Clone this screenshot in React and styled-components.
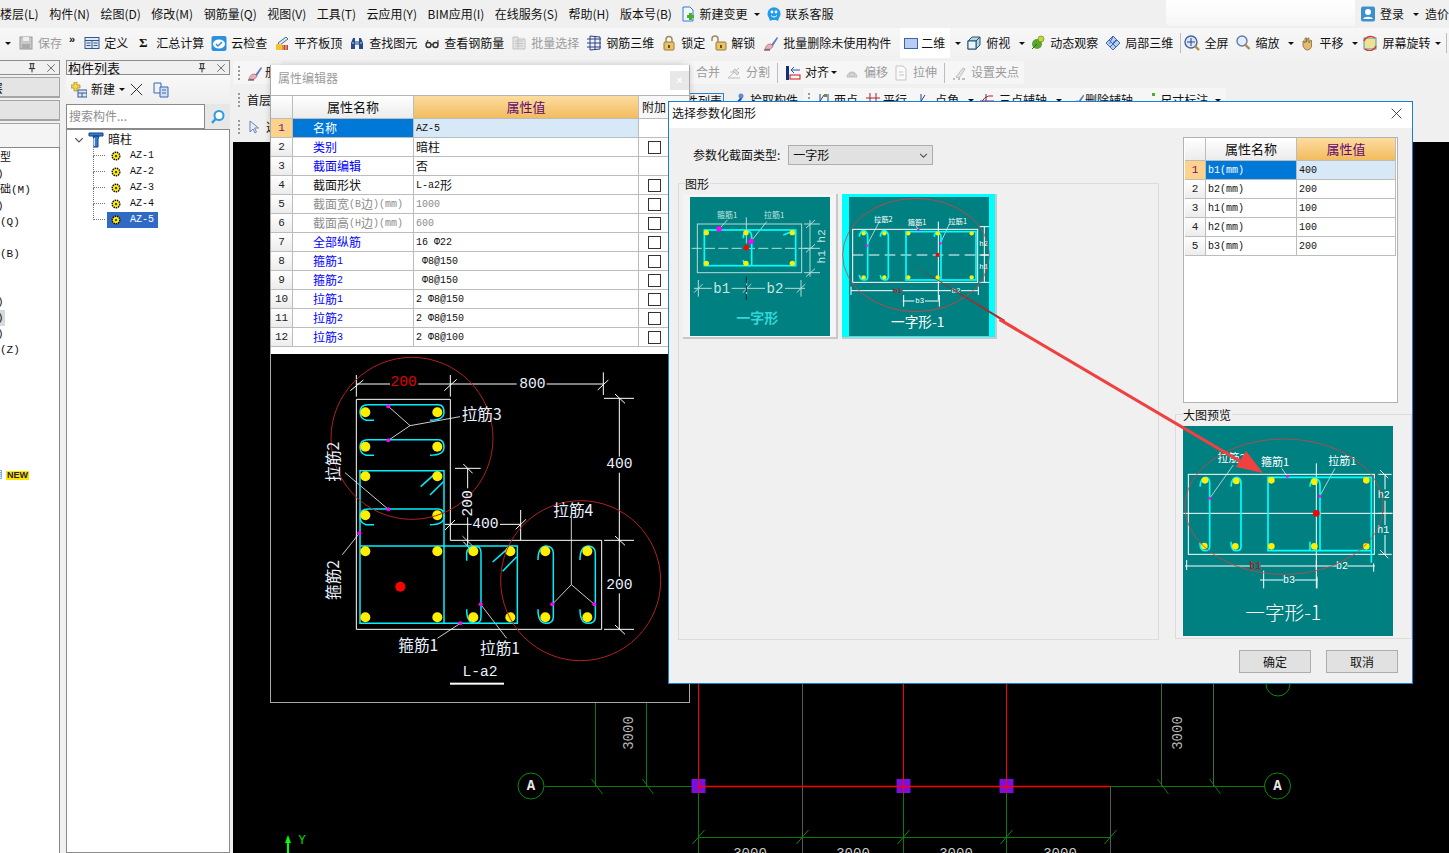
import React from 'react';
import styled, { createGlobalStyle } from 'styled-components';

const CJK = '"Noto Sans CJK SC", "Noto Sans", sans-serif';
const MONO = '"Liberation Mono", "Noto Sans CJK SC", monospace';

const GlobalStyle = createGlobalStyle`
  html, body { margin: 0; padding: 0; background: #f0f0f0; }
  body { font: 12px/1.2 ${CJK}; color: #111; }
  * { box-sizing: border-box; }
`;

const Page = styled.div`
  position: relative;
  width: 1449px;
  height: 853px;
  overflow: hidden;
  background: #f0f0f0;
  display: flex;
  flex-direction: column;
`;

const MenuBar = styled.div`
  height: 28px;
  display: flex;
  align-items: center;
  gap: 10.5px;
  white-space: nowrap;
`;

const MenuItem = styled.span`
  margin-left: ${p => p.$ml || 0}px;
`;

const BlankTab = styled.div`
  position: absolute;
  left: 1166px;
  top: 0;
  width: 189px;
  height: 26px;
  border-radius: 0 0 4px 4px;
  background: linear-gradient(#fff, #f6f6f6);
`;

const MenuRight = styled.div`
  margin-left: auto;
  display: flex;
  align-items: center;
  gap: 4px;
  width: 89px;
  flex: none;
`;

const MainBar = styled.div`
  height: 32px;
  display: flex;
  align-items: center;
  gap: 7px;
  padding: 0 0 2px 5px;
  white-space: nowrap;
  background: linear-gradient(#f7f7f7, #f1f1f1);
`;

const Tool = styled.span`
  display: inline-flex;
  align-items: center;
  flex: none;
  gap: ${p => p.$gap ?? 4}px;
  margin-left: ${p => p.$ml || 0}px;
  color: ${p => (p.$muted ? '#9b9b9b' : '#111')};
`;

const ActiveTool = styled(Tool)`
  height: 30px;
  padding: 0 5px 0 3px;
  background: #fff;
`;

const Sigma = styled.b`
  width: 10px;
  font: bold 13px "Liberation Serif", serif;
  text-align: center;
`;

const Caret = styled.i`
  display: inline-block;
  flex: none;
  margin-left: ${p => p.$ml || 0}px;
  margin-right: ${p => p.$mr || 0}px;
  border-style: solid;
  border-width: 3px 3px 0;
  border-color: #111 transparent transparent;
`;

const Sep = styled.i`
  width: 1px;
  height: 20px;
  flex: none;
  background: #bdbdbd;
`;

const Chevrons = styled.b`
  font: bold 11px/1 "Liberation Sans", sans-serif;
  margin-top: -8px;
`;

const Glyph = styled.svg`
  width: ${p => p.$size || 16}px;
  height: ${p => p.$size || 16}px;
  flex: none;
  display: block;
`;

const Body = styled.div`
  flex: 1;
  min-height: 0;
  display: flex;
`;

const DockPanel = styled.div`
  flex: none;
  width: ${p => p.$w}px;
  margin-left: ${p => p.$ml || 0}px;
  display: flex;
  flex-direction: column;
`;

const DockTitle = styled.div`
  height: 15px;
  display: flex;
  align-items: center;
  gap: 9px;
  padding: 0 3px 0 1px;
  border: 1px solid #8c8c8c;
  border-left-width: ${p => (p.$open ? 0 : 1)}px;
  font-size: 13px;
  line-height: 13px;
  justify-content: flex-end;
`;

const DockName = styled.span`
  margin-right: auto;
`;

const SideTab = styled.div`
  height: ${p => p.$h}px;
  margin-top: 2px;
  overflow: hidden;
  white-space: nowrap;
  text-indent: -9px;
  background: ${p => p.$pale ? '#f4f4f4' : '#e4e4e4'};
  border: 1px solid #a5a5a5;
  border-left: 0;
  border-bottom-width: ${p => p.$pale ? 0 : 2}px;
  padding-top: 3px;
`;

const SideList = styled.div`
  flex: 1;
  background: #fff;
  border-top: 1px solid #888;
  border-right: 1px solid #888;
  padding-top: 2px;
  position: relative;
  font-family: ${MONO};
`;

const SideRow = styled.div`
  height: 16px;
  line-height: 16px;
  width: ${p => (p.$on ? 8 : 58)}px;
  white-space: nowrap;
  background: ${p => (p.$on ? '#d9d9d9' : 'transparent')};
  font-size: 11px;
  margin-left: ${p => p.$shift || 0}px;
`;

const NewRow = styled.div`
  display: flex;
  align-items: center;
  gap: 1px;
  margin: 112px 0 0 -5px;
`;

const NewBadge = styled.span`
  background: #ffe400;
  color: #222;
  font: bold 9px/9px "Liberation Sans", sans-serif;
  padding: 0 1px;
`;

const ListTools = styled.div`
  height: 29px;
  display: flex;
  align-items: center;
  padding-left: 5px;
  gap: 4px;
  background: linear-gradient(#f8f8f8, #efefef);
`;

const SearchRow = styled.div`
  height: 25px;
  display: flex;
  background: #e7e7e7;
`;

const SearchBox = styled.div`
  flex: 1;
  background: #fff;
  border: 1px solid #8a8a8a;
  color: #8e8e8e;
  font-size: 12px;
  line-height: 22px;
  padding-left: 2px;
`;

const SearchBtn = styled.div`
  width: 25px;
  display: flex;
  align-items: center;
  justify-content: center;
`;

const TreeBox = styled.div`
  flex: 1;
  background: #fff;
  border: 1px solid #8a8a8a;
  padding-top: 1px;
  font-family: ${MONO};
`;

const TreeRoot = styled.div`
  height: 17px;
  display: flex;
  align-items: center;
  padding-left: 7px;
  font-family: ${CJK};
  gap: 4px;
`;

const TreeRow = styled.div`
  height: 16px;
  display: flex;
  align-items: center;
  position: relative;
  margin-left: 40px;
  width: 51px;
  padding-left: 3px;
  gap: 8px;
  font-size: 10px;
  color: ${p => (p.$on ? '#fff' : '#111')};
  background: ${p => (p.$on ? '#316ac5' : 'transparent')};
`;

const TreeBranch = styled.i`
  position: absolute;
  left: -14px;
  top: ${p => (p.$first ? -3 : -8)}px;
  width: 12px;
  height: ${p => (p.$first ? 11 : 16)}px;
  border-left: 1px dotted #777;
  border-bottom: 1px dotted #777;
`;

const Workspace = styled.div`
  flex: 1;
  min-width: 0;
  margin-left: 3px;
  display: flex;
  flex-direction: column;
`;

const ToolRow = styled.div`
  height: ${p => p.$h}px;
  margin-top: ${p => p.$mt || 0}px;
  display: flex;
  align-items: center;
  white-space: nowrap;
`;

const ToolGroup = styled.div`
  height: 100%;
  flex: none;
  display: flex;
  align-items: center;
  gap: ${p => p.$gap ?? 7}px;
  margin-left: ${p => p.$ml || 0}px;
  padding: 0 5px 0 ${p => p.$pl ?? 5}px;
  border-radius: 2px;
  background: ${p => (p.$plain ? 'transparent' : '#f6f6f6')};
`;

const Grip = styled.i`
  width: 2px;
  height: 14px;
  flex: none;
  border-left: 2px dotted #999;
`;

const OutlineTab = styled.span`
  height: 15px;
  margin-left: 398px;
  padding-right: 1px;
  border-right: 1px solid #2f7fd0;
  border-top: 1px solid #2f7fd0;
`;

const Canvas = styled.div`
  flex: 1;
  min-height: 0;
  background: #000;
`;

const CanvasSvg = styled.svg`
  display: block;
  width: 1216px;
  height: 711px;
`;

const Floating = styled.section`
  position: absolute;
  left: ${p => p.$x}px;
  top: ${p => p.$y}px;
  width: ${p => p.$w}px;
  height: ${p => p.$h}px;
  display: flex;
  flex-direction: column;
`;

const EditorWin = styled(Floating)`
  background: #fff;
  border-right: 1px solid #a9a9a9;
  border-bottom: 1px solid #a9a9a9;
  border-left: 1px solid #a9a9a9;
  box-shadow: 0 0 6px rgba(0, 0, 0, 0.18);
`;

const EditorHead = styled.div`
  height: 30px;
  flex: none;
  display: flex;
  align-items: center;
  justify-content: space-between;
  padding: 0 0 3px 7px;
  color: #9c9c9c;
`;

const GhostClose = styled.div`
  width: 19px;
  height: 19px;
  margin: 4px 0 0;
  background: #e8e8e8;
  color: #fff;
  font: bold 10px/19px "Liberation Sans", sans-serif;
  text-align: center;
`;

const TableWrap = styled.div`
  height: 259px;
  flex: none;
  border-top: 1px solid #b5b5b5;
`;

const PropGrid = styled.div`
  display: grid;
  grid-template-columns: ${p => p.$cols};
  grid-template-rows: 23px;
  grid-auto-rows: 19px;
`;

const Cell = styled.div`
  display: flex;
  align-items: center;
  white-space: nowrap;
  overflow: hidden;
  border-right: 1px solid #bcbcbc;
  border-bottom: 1px solid #bcbcbc;
`;

const CornerCell = styled(Cell)`
  background: linear-gradient(#fff, #ececec);
`;

const HeadCell = styled(Cell)`
  justify-content: center;
  font-size: 13px;
  background: linear-gradient(#fff, #ececec);
`;

const ValueHead = styled(HeadCell)`
  color: #5f0a78;
  background: linear-gradient(#fcdc9f, #f2bc5e);
`;

const TailHead = styled(Cell)`
  justify-content: center;
  background: #f7f7f7;
  border-right: 0;
`;

const NumCell = styled(Cell)`
  justify-content: center;
  font: 11px ${MONO};
  color: ${p => (p.$on ? '#7a0a7a' : '#222')};
  background: ${p => (p.$on ? '#fdd38c' : 'linear-gradient(#fff, #ececec)')};
`;

const NameCell = styled(Cell)`
  padding: 1px 0 0 ${p => p.$pad}px;
  color: ${p => (p.$on ? '#fff' : p.$tone || '#111')};
  background: ${p => (p.$on ? '#0078d7' : '#fff')};
`;

const ValueCell = styled(Cell)`
  padding-left: 2px;
  color: ${p => p.$tone || '#111'};
  background: ${p => (p.$on ? '#d7e8f7' : '#fff')};
`;

const CheckCell = styled(Cell)`
  justify-content: center;
  border-right: 0;
`;

const CheckBox = styled.i`
  width: 13px;
  height: 13px;
  border: 1px solid #333;
  margin-left: 1px;
`;

const Latin = styled.span`
  font: 10px ${MONO};
  white-space: pre;
`;

const DrawingPane = styled.div`
  flex: 1;
  background: #000;
  padding: 6px 0 0 29px;
`;

const Drawing = styled.svg`
  display: block;
  overflow: visible;
  width: ${p => p.$w}px;
  height: ${p => p.$h}px;
`;

const DialogWin = styled(Floating)`
  background: #f0f0f0;
  border: 1px solid #1a7fd0;
`;

const DialogHead = styled.div`
  height: 26px;
  flex: none;
  display: flex;
  align-items: center;
  justify-content: space-between;
  padding: 0 9px 3px 3px;
  background: #fff;
`;

const DialogBody = styled.div`
  flex: 1;
  display: flex;
`;

const DialogLeft = styled.div`
  width: 506px;
  flex: none;
  padding-left: 9px;
`;

const TypeRow = styled.div`
  display: flex;
  align-items: center;
  gap: 8px;
  margin: 17px 0 0 15px;
  height: 20px;
`;

const FakeSelect = styled.div`
  width: 145px;
  height: 20px;
  display: flex;
  align-items: center;
  justify-content: space-between;
  padding: 0 4px;
  background: #e1e1e1;
  border: 1px solid #adadad;
`;

const GroupBox = styled.div`
  position: relative;
  border: 1px solid #dcdcdc;
  width: ${p => p.$w}px;
  height: ${p => p.$h}px;
  margin-top: ${p => p.$mt}px;
  margin-left: ${p => p.$ml || 0}px;
  padding: ${p => p.$pad};
`;

const GroupLegend = styled.span`
  position: absolute;
  left: ${p => p.$x}px;
  top: -8px;
  background: #f0f0f0;
  padding-right: 1px;
  line-height: 15px;
`;

const ThumbRow = styled.div`
  display: flex;
  gap: 4px;
`;

const ThumbFrame = styled.div`
  width: 155px;
  height: 145px;
  display: flex;
  justify-content: center;
  padding-top: 3px;
  background: ${p => (p.$on ? '#00ffff' : '#f4f4f4')};
  border-right: 2px solid #c8c8c8;
  border-bottom: 2px solid #c8c8c8;
`;

const DialogRight = styled.div`
  flex: 1;
  display: flex;
  flex-direction: column;
`;

const ParamBox = styled.div`
  width: 215px;
  height: 266px;
  margin: 9px 0 0 8px;
  background: #fff;
  border: 1px solid #b3b3b3;
  padding: 0 2px 0 1px;
`;

const Teal = styled.div`
  width: ${p => p.$w}px;
  height: ${p => p.$h}px;
  background: #008080;
`;

const DialogFoot = styled.div`
  height: 43px;
  flex: none;
  display: flex;
  justify-content: flex-end;
  gap: 15px;
  padding: 10px 14px 0 0;
`;

const PushButton = styled.div`
  width: 72px;
  height: 23px;
  line-height: 21px;
  text-align: center;
  background: #e1e1e1;
  border: 1px solid #adadad;
`;

const Annotation = styled.svg`
  position: absolute;
  left: 0;
  top: 0;
  width: 1449px;
  height: 853px;
  pointer-events: none;
`;

const DrawText = styled.text`
  font-family: ${p => (p.$mono ? MONO : CJK)};
  text-anchor: middle;
  dominant-baseline: central;
`;

const icons = {
  save: <><rect x="2" y="2" width="12" height="12" fill="#c9c9c9" stroke="#9a9a9a" /><rect x="5" y="2" width="6" height="4" fill="#eee" /><rect x="4" y="9" width="8" height="5" fill="#aaa" /></>,
  def: <><rect x="1" y="2.5" width="14" height="11" fill="#dfe8f6" stroke="#33588f" /><path d="M1 5.5h14M8 5.5v8M2.5 8h4M2.5 10.5h4M9.5 8h4M9.5 10.5h4" stroke="#33588f" /></>,
  cloud: <><rect x="0.5" y="1" width="15" height="15" rx="2" fill="#2d90dd" /><ellipse cx="8" cy="9" rx="6" ry="4.5" fill="#fff" /><path d="M5 9l2 2 4-4" stroke="#2d90dd" strokeWidth="1.5" fill="none" /></>,
  level: <><path d="M4 8L12 2l2 2-8 6z" fill="#dfe8ee" stroke="#4a6c8c" /><rect x="2" y="9" width="6" height="6" fill="#f2c230" /><rect x="8" y="10" width="6" height="5" fill="#b5492a" /><path d="M9 10v5M12 10v5" stroke="#f0d0b0" /></>,
  binoc: <><path d="M2 14V8l2-5h2v11zM14 14V8l-2-5h-2v11z" fill="#2b4a85" /><rect x="6" y="6" width="4" height="4" fill="#7d97c2" /><path d="M3 8h2M11 8h2" stroke="#c7d5ea" /></>,
  glasses: <><circle cx="4.5" cy="10" r="2.5" fill="none" stroke="#333" strokeWidth="1.4" /><circle cx="11.5" cy="10" r="2.5" fill="none" stroke="#333" strokeWidth="1.4" /><path d="M7 9.5h2M2 9l2-4M14 9V5" stroke="#333" /></>,
  batch: <><path d="M2 2h5v2h7v10H2z" fill="#e4e4e4" stroke="#c2c2c2" /><path d="M4 6h8M4 8.5h8M4 11h8M7 4v10" stroke="#c2c2c2" /></>,
  lattice: <path d="M4 1v14M9 1v14M1 4h14M1 8h14M1 12h14M14 2v12M4 1l10 1M4 15l10-1" stroke="#26408a" fill="none" />,
  lock: <><path d="M5 7V4.5a3 3 0 0 1 6 0V7" stroke="#9a8a60" strokeWidth="1.5" fill="none" /><rect x="3" y="7" width="10" height="8" rx="1" fill="#e7c36a" stroke="#9c7c30" /><rect x="7" y="10" width="2" height="3" fill="#6b4f10" /></>,
  unlock: <><path d="M1 6V4a3 3 0 0 1 6 0v3" stroke="#9a8a60" strokeWidth="1.5" fill="none" /><rect x="5" y="7" width="10" height="8" rx="1" fill="#e7c36a" stroke="#9c7c30" /><rect x="9" y="10" width="2" height="3" fill="#6b4f10" /></>,
  brush: <><path d="M8 10L14 2l1 1-5 8z" fill="#5a78c0" /><path d="M2 14c1-4 3-5 6-5l2 2c-1 3-4 4-8 3z" fill="#e8b0b8" stroke="#a05060" strokeWidth="0.6" /><path d="M1 15h6" stroke="#333" /></>,
  plane: <rect x="1.5" y="3.5" width="13" height="10" fill="#b9cdf2" stroke="#3a62b5" />,
  cube: <><path d="M2 6l4-4h8v8l-4 4H2z" fill="#b7d6e6" stroke="#28506e" /><path d="M2 6h8v8M10 6l4-4" fill="none" stroke="#28506e" /><rect x="2" y="6" width="8" height="8" fill="#eaf5fa" stroke="#28506e" /></>,
  orbit: <><circle cx="7" cy="9" r="5" fill="#5aa52f" /><circle cx="11" cy="4" r="3" fill="#c7d92c" stroke="#557a12" strokeWidth="0.6" /><path d="M2 14l5-5" stroke="#2e6a12" /></>,
  local: <><path d="M1 8l7-7 7 7-7 7z" fill="#b9cff0" stroke="#3d68ad" /><path d="M4 5l7 7M8 1.5l-3.5 7M12 5l-7 7M8 8l3-3" stroke="#3d68ad" /></>,
  full: <><circle cx="7" cy="7" r="6" fill="#dbe6f7" stroke="#48639c" strokeWidth="1.4" /><path d="M7 3v8M3 7h8" stroke="#27458a" /><path d="M11 11l4 4" stroke="#b28a3a" strokeWidth="2.4" /></>,
  zoom: <><circle cx="7" cy="6" r="5" fill="#e4edf9" stroke="#617aa6" strokeWidth="1.4" /><path d="M10.5 10l4 4" stroke="#b28a3a" strokeWidth="2.4" /></>,
  pan: <path d="M4 9V6l1 0 1 2V3h1.5v4L9 3l1 0v5l1.5-3 1 .5V11c0 2-2 4-4 4s-3-1-4.5-4z" fill="#e3bb72" stroke="#7a5a24" strokeWidth="0.7" />,
  rotate: <><rect x="2" y="3" width="12" height="11" fill="#d8e8a8" stroke="#6a8a9a" /><rect x="4" y="5" width="8" height="6" fill="#f2e08a" /><path d="M2 6a7 7 0 0 1 11-3M14 11a7 7 0 0 1-11 3" stroke="#e0352a" strokeWidth="1.4" fill="none" /></>,
  doc: <><path d="M3 1h7l3 3v11H3z" fill="#f2f7fd" stroke="#2f7fd0" /><rect x="7" y="9" width="7" height="3" fill="#48b030" /><rect x="9" y="7" width="3" height="7" fill="#48b030" /></>,
  service: <><path d="M3 12a6.5 6.5 0 1 1 10 0l-1 3-2-1H6l-2 1z" fill="#1f9bea" /><circle cx="6" cy="6" r="1.4" fill="#fff" /><circle cx="10" cy="6" r="1.4" fill="#fff" /><path d="M5 9.5c2 2 4 2 6 0" stroke="#fff" fill="none" /></>,
  user: <><rect x="1" y="0.5" width="14" height="15" rx="2" fill="#3d8fd0" /><circle cx="8" cy="6" r="3" fill="#fff" /><path d="M3 13c1-3 9-3 10 0z" fill="#fff" /></>,
  split: <><path d="M2 13L13 3M2 13h12M4 7h5" stroke="#bdbdbd" fill="none" /><path d="M9 4l4 4-2 2-4-4z" fill="#dcdcdc" stroke="#bbb" /></>,
  align: <><path d="M2.5 1v14" stroke="#12307a" strokeWidth="3" /><path d="M6 5h9" stroke="#1d58c4" /><path d="M6 5l3-3M6 5l3 3" stroke="#1d58c4" fill="none" /><rect x="5" y="10" width="10" height="4" fill="none" stroke="#d01515" /></>,
  offset: <path d="M3 12a5 5 0 1 1 10 0zM5 11a3 3 0 1 1 6 0z" fill="#dedede" stroke="#bdbdbd" />,
  stretch: <><path d="M3 1h7l3 3v11H3z" fill="#fafafa" stroke="#c4c4c4" /><path d="M6 7h4M6 10h5" stroke="#c4c4c4" /></>,
  grip: <><path d="M2 14h2M7 14h2M11 14h3" stroke="#aaa" strokeWidth="1.4" /><path d="M5 12l7-9 2 1-6 9z" fill="#e4e4e4" stroke="#bbb" /></>,
  merge: <path d="M1 4h3M1 8h3M1 12h3" stroke="#bbb" />,
  pick: <><path d="M3 14l7-8 3-3-1 4-7 8z" fill="#1e4fa8" /><circle cx="11" cy="4" r="2.5" fill="#5d8ad0" /></>,
  twoPt: <><path d="M1 13h14M4 2v12M12 2v12M1 14L8 3" stroke="#27408f" fill="none" /><rect x="8" y="2" width="3" height="3" fill="#5a9a2a" /></>,
  parallel: <path d="M1 6h14M1 11h14M5 1v14M11 1v14" stroke="#b02030" fill="none" />,
  angle: <><path d="M1 13h14M4 2v12M1 14L8 3" stroke="#27408f" fill="none" /><rect x="11" y="11" width="3" height="3" fill="#d01515" /></>,
  arc: <><path d="M2 13A10 10 0 0 1 14 4M1 9h14" stroke="#d01515" fill="none" /><path d="M7 2v12" stroke="#27408f" /></>,
  size: <><rect x="2" y="12" width="3" height="3" fill="#48b030" /><rect x="12" y="1" width="3" height="3" fill="#48b030" /></>,
  cursor: <path d="M5 2v11l3-3 2 4 1.5-1-2-4h4z" fill="#e8eef8" stroke="#6b83ad" />,
  add: <><path d="M3 0h3v3h3v3H6v3H3V6H0V3h3z" fill="#f4d448" stroke="#8a7a20" strokeWidth="0.6" /><rect x="7" y="8" width="9" height="7" fill="#dfe8f6" stroke="#33588f" /><path d="M7 11h9M11 11v4" stroke="#33588f" /></>,
  copy: <><path d="M1 1h7v10H1z" fill="#eef3fb" stroke="#3b66ad" /><path d="M7 5h8v10H7z" fill="#cfe0f6" stroke="#3b66ad" /><path d="M9 8h4M9 11h4" stroke="#3b66ad" /></>,
  search: <><circle cx="9" cy="6.5" r="4.5" fill="#fff" stroke="#2e9be0" strokeWidth="2" /><path d="M5.5 10l-3.5 4" stroke="#2e9be0" strokeWidth="2.4" /></>,
  column: <><path d="M1 1h14v3H1zM5 4h6l-1 3v8H6V7z" fill="#2f7fd0" stroke="#1a3f8a" /><path d="M6.5 6v8" stroke="#cfe4fa" /></>,
  gear: <><circle cx="8" cy="8" r="5" fill="#ffee00" stroke="#111" strokeDasharray="2 1" strokeWidth="2" /><circle cx="8" cy="8" r="3.5" fill="#ffee00" /><circle cx="8" cy="8" r="1.5" fill="#222" /></>,
  sheet: <><rect x="1" y="1" width="9" height="13" fill="#fff" stroke="#2f7fd0" /><path d="M1 4h9M1 7h9M1 10h9" stroke="#2f7fd0" /></>,
  pin: <path d="M4 1h8M6 1v8M10 1v8M3 9h10M8 9v6" stroke="#111" strokeWidth="1.4" />,
  cross: <path d="M2 2l12 12M14 2L2 14" stroke="#222" />,
  chevron: <path d="M2 5l6 6 6-6" fill="none" stroke="#555" strokeWidth="2" />,
};

const Icon = ({ name, size }) => (
  <Glyph $size={size} viewBox="0 0 16 16">{icons[name]}</Glyph>
);

const menuItems = [
  '楼层(L)', '构件(N)', '绘图(D)', '修改(M)', '钢筋量(Q)', '视图(V)', '工具(T)',
  '云应用(Y)', 'BIM应用(I)', '在线服务(S)', '帮助(H)', '版本号(B)',
];

const sideRows = [
  ['型', 0], [')', -3], ['础(M)', 0], [')', -3], ['(Q)', 0], ['', 0], ['(B)', 0], ['', 0],
  ['', 0], [')', -3], [')', -3, true], [')', -3], ['(Z)', 0],
];

const treeRows = ['AZ-1', 'AZ-2', 'AZ-3', 'AZ-4', 'AZ-5'];

const BLUE = '#0000ff';
const GREY = '#8c8c8c';

const propRows = [
  { name: '名称', value: <Latin>AZ-5</Latin>, noCheck: true },
  { name: '类别', tone: BLUE, value: '暗柱' },
  { name: '截面编辑', tone: BLUE, value: '否', noCheck: true },
  { name: '截面形状', value: <><Latin>L-a2</Latin>形</> },
  { name: <>截面宽<Latin>(B</Latin>边<Latin>)(mm)</Latin></>, tone: GREY, value: <Latin>1000</Latin>, valueTone: GREY },
  { name: <>截面高<Latin>(H</Latin>边<Latin>)(mm)</Latin></>, tone: GREY, value: <Latin>600</Latin>, valueTone: GREY },
  { name: '全部纵筋', tone: BLUE, value: <Latin>16 Φ22</Latin> },
  { name: <>箍筋<Latin>1</Latin></>, tone: BLUE, value: <Latin> Φ8@150</Latin> },
  { name: <>箍筋<Latin>2</Latin></>, tone: BLUE, value: <Latin> Φ8@150</Latin> },
  { name: <>拉筋<Latin>1</Latin></>, tone: BLUE, value: <Latin>2 Φ8@150</Latin> },
  { name: <>拉筋<Latin>2</Latin></>, tone: BLUE, value: <Latin>2 Φ8@150</Latin> },
  { name: <>拉筋<Latin>3</Latin></>, tone: BLUE, value: <Latin>2 Φ8@100</Latin> },
];

const paramRows = [
  ['b1(mm)', '400'], ['b2(mm)', '200'], ['h1(mm)', '100'], ['h2(mm)', '100'], ['b3(mm)', '200'],
];

const gridX = [698.5, 802.5, 903.5, 1006.5, 1110.5];

const AxisBubble = ({ x, y }) => (
  <g>
    <circle cx={x} cy={y} r="13" fill="#000" stroke="#0a8a0a" />
    <DrawText x={x} y={y} fontSize="14" fontWeight="bold" fill="#e8e8e8" $mono>A</DrawText>
  </g>
);

const Slash = ({ x, y, s = 6, c = '#0a8a0a' }) => (
  <line x1={x - s} y1={y + s + 1} x2={x + s} y2={y - s - 1} stroke={c} />
);

const CadCanvas = () => (
  <CanvasSvg viewBox="233 142 1216 711">
    <g stroke="#0a7a0a" fill="none">
      <path d="M595.5 684V786M646.5 684V786" />
      <path d="M698.5 786V853M903.5 786V853M1006.5 786V853" />
      <path d="M545 786.5H698M1110 786.5H1265M698 837.5H1110" />
    </g>
    <path d="M802.5 684V853M1110.5 786V853" stroke="#4a5f4a" />
    <path d="M1161.5 684V786M1213.5 684V786" stroke="#3f6a3f" />
    <path d="M698.5 684V786M903.5 684V786M1006.5 684V786" stroke="#f00" />
    {[698.5, 903.5, 1006.5].map(x => (
      <rect key={x} x={x - 7} y="779" width="14" height="14" fill="#7a0fe0" />
    ))}
    <path d="M698 786.5H1110" stroke="#f00" strokeWidth="1.6" />
    {[698.5, 903.5, 1006.5].map(x => (
      <line key={x} x1={x} x2={x} y1="779" y2="793" stroke="#f00" />
    ))}
    {[595.5, 646.5, 1161.5, 1213.5].map(x => (
      <line key={x} x1={x - 4} y1="779" x2={x + 7} y2="794" stroke="#0a7a0a" />
    ))}
    {gridX.map(x => <Slash key={x} x={x} y={837} s={6} />)}
    <AxisBubble x={531} y={786} />
    <AxisBubble x={1277.5} y={786} />
    <circle cx="1278" cy="684" r="12" fill="none" stroke="#0a8a0a" />
    <DrawText x="629" y="733" fontSize="14" fill="#b9b9b9" $mono transform="rotate(-90 629 733)">3000</DrawText>
    <DrawText x="1178" y="733" fontSize="14" fill="#b9b9b9" $mono transform="rotate(-90 1178 733)">3000</DrawText>
    {[750, 853, 956, 1060].map(x => (
      <DrawText key={x} x={x} y="854" fontSize="14" fill="#c9c9c9" $mono>3000</DrawText>
    ))}
    <path d="M288 835l3 8h-2v10h-2v-10h-2z" fill="#00ff00" />
    <DrawText x="302" y="841" fontSize="12" fill="#00e000" $mono>Y</DrawText>
  </CanvasSvg>
);

// 参数化截面图, 坐标按 3 倍放大图来写
const SectionDrawing = () => {
  const dots = [
    [196, 157], [412, 157], [196, 260], [412, 260], [196, 349], [412, 349], [196, 466], [412, 466],
    [196, 574], [412, 574], [520, 574], [631, 574], [196, 772], [412, 772], [520, 772], [631, 772],
    [736, 574], [862, 574], [736, 772], [862, 772],
  ];
  const pinks = [[265, 139], [265, 241], [265, 448], [178, 520], [542, 733], [481, 790], [757, 733], [883, 733]];
  const tie = y => `M222 ${y + 47}H198Q180 ${y + 41} 180 ${y + 23}Q180 ${y} 204 ${y}H415Q432 ${y} 432 ${y + 23}Q432 ${y + 47} 390 ${y + 47}`;
  const tall = dx => `M${714 + dx} 600Q${714 + dx} 558 ${740 + dx} 558Q${760 + dx} 560 ${760 + dx} 580V770Q${760 + dx} 790 ${738 + dx} 790Q${714 + dx} 790 ${714 + dx} 748`;
  return (
    <Drawing $w={380} $h={340} viewBox="0 0 1140 1020">
      <g fill="none" stroke="#fff" strokeWidth="3">
        <path d="M169 118H451V541H905V808H169Z" />
        <path d="M169 72H270M355 72H650M740 72H910M169 45V110M451 45V110M910 37V105" />
        <path d="M151 92L190 60M433 92L470 58M893 90L925 60" />
        <path d="M958 115V290M958 338V650M958 700V808M912 115H1002M912 541H1002M912 808H1002" />
        <path d="M945 102L975 130M945 528L975 556M945 795L975 823" />
        <path d="M465 325H542M503 325V385M503 472V558M490 312L518 340M490 545L518 575" />
        <path d="M435 493H515M600 493H662M662 450V540M647 508L678 478M435 510L465 480" />
        <path d="M265 139L330 197M265 241L330 197L480 170M265 448L135 338M178 520L127 584M542 733L620 835M481 790L412 835M757 733L814 674L883 733M814 674V470M487 528L520 560" strokeWidth="2.4" />
      </g>
      <g fill="none" stroke="#00f0ff" strokeWidth="4.5">
        <path d={tie(134)} />
        <path d={tie(239)} />
        <path d={tie(447)} />
        <path d="M180 332H432V790H180ZM180 558H652V790H432" />
        <path d="M500 602V578Q503 560 522 560H532Q543 562 543 580V772Q543 790 525 790Q500 790 500 748" />
        <path d={tall(0)} />
        <path d={tall(126)} />
        <path d="M362 380L412 335M390 405L430 365M578 606L630 560M608 634L650 590" />
      </g>
      {dots.map(([x, y]) => <circle key={`${x}-${y}`} cx={x} cy={y} r="15" fill="#ffee00" />)}
      {pinks.map(([x, y]) => <circle key={`${x}-${y}`} cx={x} cy={y} r="6" fill="#ff00ff" />)}
      <circle cx="301" cy="680" r="15" fill="#ff0000" />
      <g fill="none" stroke="#b02222" strokeWidth="3">
        <circle cx="336" cy="235" r="243" />
        <circle cx="842" cy="662" r="240" />
      </g>
      <g fill="#e9f3ff" fontSize="47">
        <DrawText x="311" y="65" fontSize="44" fill="#e00000" $mono>200</DrawText>
        <DrawText x="697" y="72" fontSize="44" $mono>800</DrawText>
        <DrawText x="958" y="313" fontSize="44" $mono>400</DrawText>
        <DrawText x="958" y="676" fontSize="44" $mono>200</DrawText>
        <DrawText x="556" y="493" fontSize="44" $mono>400</DrawText>
        <DrawText x="503" y="430" fontSize="44" $mono transform="rotate(-90 503 430)">200</DrawText>
        <DrawText x="545" y="160">拉筋3</DrawText>
        <DrawText x="820" y="447">拉筋4</DrawText>
        <DrawText x="355" y="852">箍筋1</DrawText>
        <DrawText x="600" y="862">拉筋1</DrawText>
        <DrawText x="97" y="305" transform="rotate(-90 97 305)">拉筋2</DrawText>
        <DrawText x="97" y="660" transform="rotate(-90 97 660)">箍筋2</DrawText>
        <DrawText x="540" y="935" fontSize="44" $mono>L-a2</DrawText>
      </g>
      <rect x="450" y="968" width="162" height="6" fill="#fff" />
    </Drawing>
  );
};

const ThumbPlain = () => (
  <Drawing $w={140} $h={139} viewBox="60 291 420 417">
    <g fill="none" stroke="#b4dcd8" strokeWidth="3">
      <rect x="82" y="372" width="313" height="146" />
      <path d="M402 372H450M402 445H450M402 518H450M420 360V530M408 384L435 360M408 457L435 433M408 530L435 506" />
      <path d="M72 565H125M185 565H285M345 565H405M85 540V590M230 540V590M393 540V590M72 578L98 552M218 578L244 552M380 578L406 552" />
      <path d="M65 445H430" strokeDasharray="30 10" />
      <path d="M229 352V430M147 387L172 360M243 424L290 365" />
    </g>
    <path d="M229 530V600" stroke="#123" strokeWidth="3" strokeDasharray="20 6" />
    <g fill="none" stroke="#00ffff" strokeWidth="5">
      <rect x="103" y="390" width="274" height="107" />
      <path d="M220 415Q220 392 232 392Q245 395 245 410V497M340 405L372 392M220 480Q220 497 240 497" />
    </g>
    {[[109, 398], [228, 398], [367, 398], [109, 490], [228, 490], [367, 490]].map(([x, y]) => (
      <circle key={`${x}-${y}`} cx={x} cy={y} r="8" fill="#ffee00" />
    ))}
    <circle cx="147" cy="387" r="8" fill="#ff00ff" />
    <circle cx="243" cy="424" r="8" fill="#ff00ff" />
    <circle cx="229" cy="443" r="8" fill="#ff0000" />
    <g fill="#c4e6e2">
      <DrawText x="172" y="343" fontSize="24">箍筋1</DrawText>
      <DrawText x="313" y="343" fontSize="24">拉筋1</DrawText>
      <DrawText x="155" y="567" fontSize="42" $mono>b1</DrawText>
      <DrawText x="315" y="567" fontSize="42" $mono>b2</DrawText>
      <DrawText x="455" y="408" fontSize="34" $mono transform="rotate(-90 455 408)">h2</DrawText>
      <DrawText x="455" y="470" fontSize="34" $mono transform="rotate(-90 455 470)">h1</DrawText>
    </g>
    <DrawText x="262" y="652" fontSize="42" fontWeight="bold" fill="#2fd8d8">一字形</DrawText>
  </Drawing>
);

const ThumbActive = () => (
  <Drawing $w={140} $h={139} viewBox="534 291 420 417">
    <g fill="none" stroke="#fff" strokeWidth="3">
      <rect x="545" y="388" width="375" height="159" />
      <path d="M545 465H955" strokeDasharray="32 16" />
      <path d="M802 365V600M540 572H665M695 572H840M870 572H922M695 603H730M762 603H805M698 585V620M805 585V620M540 560V585M922 560V585" />
      <path d="M940 380V547M925 380H955M925 465H955M925 547H955" />
      <path d="M587 437L625 365M742 390L735 378M808 430L835 372" strokeWidth="2" />
    </g>
    <g fill="none" stroke="#00ffff" strokeWidth="5">
      <path d="M565 410Q568 392 578 392Q590 395 590 410V530Q590 540 578 540Q568 540 565 525" />
      <path d="M628 410Q630 392 640 392Q652 395 652 410V530Q652 540 640 540Q630 540 628 525" />
      <rect x="705" y="395" width="210" height="145" />
      <path d="M790 410Q790 398 800 398Q810 400 810 412V540" />
    </g>
    {[[578, 400], [640, 400], [712, 400], [800, 400], [902, 400], [578, 532], [640, 532], [712, 532], [800, 532], [902, 532]].map(([x, y]) => (
      <circle key={`${x}-${y}`} cx={x} cy={y} r="6.5" fill="#ffee00" />
    ))}
    <circle cx="800" cy="465" r="6.5" fill="#ff0000" />
    {[[587, 437], [742, 390], [808, 430]].map(([x, y]) => (
      <circle key={x} cx={x} cy={y} r="4" fill="#ff00ff" />
    ))}
    <g fill="#fff">
      <DrawText x="637" y="354" fontSize="22">拉筋2</DrawText>
      <DrawText x="738" y="364" fontSize="22">箍筋1</DrawText>
      <DrawText x="860" y="360" fontSize="22">拉筋1</DrawText>
      <DrawText x="855" y="572" fontSize="22" $mono>b2</DrawText>
      <DrawText x="746" y="603" fontSize="22" $mono>b3</DrawText>
      <DrawText x="938" y="432" fontSize="22" $mono>h2</DrawText>
      <DrawText x="938" y="502" fontSize="22" $mono>h1</DrawText>
      <DrawText x="740" y="664" fontSize="41">一字形-1</DrawText>
    </g>
    <DrawText x="680" y="574" fontSize="22" fill="#e00000" $mono>b1</DrawText>
    <ellipse cx="735" cy="465" rx="220" ry="170" fill="none" stroke="#d84040" strokeWidth="2.5" />
  </Drawing>
);

const PreviewDrawing = () => (
  <Drawing $w={210} $h={210} viewBox="39 78 630 630">
    <g fill="none" stroke="#fff" strokeWidth="3">
      <rect x="55" y="223" width="558" height="240" />
      <path d="M40 340H668M439 190V565" />
      <path d="M45 498H240M272 498H500M532 498H615M50 480V510M439 480V510M611 490V515M281 512V565M441 530V565M270 540H340M374 540H443" />
      <path d="M645 222V268M645 302V375M645 405V465M625 223H665M625 340H665M625 463H665M630 210L655 235M630 450L655 475" />
      <path d="M119 295L190 195M352 229L335 205M449 289L495 205" strokeWidth="2" />
    </g>
    <g fill="none" stroke="#00ffff" strokeWidth="5">
      <path d="M90 260Q92 232 108 232Q119 234 119 250V440Q119 452 105 452Q90 452 90 428" />
      <path d="M183 260Q185 232 200 232Q213 234 213 250V440Q213 452 198 452Q183 452 183 425" />
      <path d="M604 488V232H294V452H604" />
      <path d="M420 260Q422 236 436 236Q450 238 450 255V452M420 425V450" />
    </g>
    {[[105, 241], [199, 243], [304, 241], [433, 245], [589, 241], [103, 438], [196, 439], [304, 439], [433, 439], [589, 439]].map(([x, y]) => (
      <circle key={`${x}-${y}`} cx={x} cy={y} r="10" fill="#ffee00" />
    ))}
    <circle cx="439" cy="340" r="10" fill="#ff0000" />
    {[[119, 295], [352, 229], [449, 289]].map(([x, y]) => (
      <circle key={x} cx={x} cy={y} r="4.5" fill="#ff00ff" />
    ))}
    <g fill="#fff">
      <DrawText x="185" y="172" fontSize="33">拉筋2</DrawText>
      <DrawText x="315" y="182" fontSize="33">箍筋1</DrawText>
      <DrawText x="517" y="180" fontSize="33">拉筋1</DrawText>
      <DrawText x="641" y="285" fontSize="30" $mono>h2</DrawText>
      <DrawText x="640" y="390" fontSize="30" $mono>h1</DrawText>
      <DrawText x="516" y="498" fontSize="30" $mono>b2</DrawText>
      <DrawText x="357" y="540" fontSize="30" $mono>b3</DrawText>
      <DrawText x="340" y="634" fontSize="59" fontWeight="300">一字形-1</DrawText>
    </g>
    <DrawText x="256" y="498" fontSize="30" fill="#e00000" $mono>b1</DrawText>
    <ellipse cx="342" cy="320" rx="297" ry="203" fill="none" stroke="#c94545" strokeWidth="2.5" />
  </Drawing>
);

const App = () => (
  <Page>
    <GlobalStyle />
    <MenuBar>
      {menuItems.map(item => <MenuItem key={item}>{item}</MenuItem>)}
      <Tool $gap={3} $ml={-2}><Icon name="doc" /><span>新建变更</span></Tool>
      <Caret $ml={-4} />
      <Tool $gap={3} $ml={-4}><Icon name="service" /><span>联系客服</span></Tool>
      <BlankTab />
      <MenuRight>
        <Icon name="user" />
        <span>登录</span>
        <Caret $ml={5} />
        <MenuItem $ml={2}>造价</MenuItem>
      </MenuRight>
    </MenuBar>

    <MainBar>
      <Caret />
      <Tool $muted><Icon name="save" /><span>保存</span></Tool>
      <Chevrons>»</Chevrons>
      <Tool $ml={2}><Icon name="def" /><span>定义</span></Tool>
      <Tool $gap={8} $ml={3}><Sigma>Σ</Sigma><span>汇总计算</span></Tool>
      <Tool><Icon name="cloud" /><span>云检查</span></Tool>
      <Tool><Icon name="level" /><span>平齐板顶</span></Tool>
      <Tool><Icon name="binoc" /><span>查找图元</span></Tool>
      <Tool><Icon name="glasses" /><span>查看钢筋量</span></Tool>
      <Tool $muted><Icon name="batch" /><span>批量选择</span></Tool>
      <Tool><Icon name="lattice" /><span>钢筋三维</span></Tool>
      <Tool><Icon name="lock" /><span>锁定</span></Tool>
      <Tool $ml={-1}><Icon name="unlock" /><span>解锁</span></Tool>
      <Tool $ml={1}><Icon name="brush" /><span>批量删除未使用构件</span></Tool>
      <ActiveTool $gap={2} $ml={2}><Icon name="plane" /><span>二维</span></ActiveTool>
      <Caret $ml={-2} $mr={-2} />
      <Tool><Icon name="cube" /><span>俯视</span></Tool>
      <Caret $ml={2} $mr={-2} />
      <Tool><Icon name="orbit" /><span>动态观察</span></Tool>
      <Tool><Icon name="local" /><span>局部三维</span></Tool>
      <Sep />
      <Tool $ml={-4}><Icon name="full" /><span>全屏</span></Tool>
      <Tool><Icon name="zoom" /><span>缩放</span></Tool>
      <Caret $ml={2} $mr={-2} />
      <Tool><Icon name="pan" /><span>平移</span></Tool>
      <Caret $ml={2} $mr={-2} />
      <Tool $ml={-1}><Icon name="rotate" /><span>屏幕旋转</span></Tool>
      <Caret $ml={-2} $mr={-2} />
      <Sep />
    </MainBar>

    <Body>
      <DockPanel $w={60}>
        <DockTitle $open>
          <Icon name="pin" size={10} />
          <Icon name="cross" size={10} />
        </DockTitle>
        <SideTab $h={21}>层</SideTab>
        <SideTab $h={21}>、</SideTab>
        <SideTab $h={24} $pale />
        <SideList>
          {sideRows.map(([text, shift, on], i) => (
            <SideRow key={i} $shift={shift} $on={on}>{text}</SideRow>
          ))}
          <NewRow>
            <Icon name="sheet" size={10} />
            <NewBadge>NEW</NewBadge>
          </NewRow>
        </SideList>
      </DockPanel>

      <DockPanel $w={164} $ml={6}>
        <DockTitle>
          <DockName>构件列表</DockName>
          <Icon name="pin" size={10} />
          <Icon name="cross" size={10} />
        </DockTitle>
        <ListTools>
          <Icon name="add" />
          <span>新建</span>
          <Caret />
          <Icon name="cross" size={15} />
          <Tool $ml={5}><Icon name="copy" /></Tool>
        </ListTools>
        <SearchRow>
          <SearchBox>搜索构件...</SearchBox>
          <SearchBtn><Icon name="search" /></SearchBtn>
        </SearchRow>
        <TreeBox>
          <TreeRoot>
            <Icon name="chevron" size={10} />
            <Icon name="column" />
            <span>暗柱</span>
          </TreeRoot>
          {treeRows.map((row, i) => (
            <TreeRow key={row} $on={row === 'AZ-5'}>
              <TreeBranch $first={i === 0} />
              <Icon name="gear" size={12} />
              <span>{row}</span>
            </TreeRow>
          ))}
        </TreeBox>
      </DockPanel>

      <Workspace>
        <ToolRow $h={23} $mt={1}>
          <ToolGroup $pl={5}>
            <Grip />
            <Tool $gap={2}><Icon name="brush" /><span>册</span></Tool>
          </ToolGroup>
          <ToolGroup $ml={400}>
            <Tool $gap={1} $muted><Icon name="merge" size={8} /><span>合并</span></Tool>
            <Tool $muted $ml={-1}><Icon name="split" /><span>分割</span></Tool>
            <Sep />
            <Tool><Icon name="align" /><span>对齐</span><Caret $ml={-2} /></Tool>
            <Tool $muted><Icon name="offset" /><span>偏移</span></Tool>
            <Tool $muted $ml={-2}><Icon name="stretch" /><span>拉伸</span></Tool>
            <Sep />
            <Tool $muted $ml={-1}><Icon name="grip" /><span>设置夹点</span></Tool>
          </ToolGroup>
        </ToolRow>
        <ToolRow $h={24} $mt={4}>
          <ToolGroup $plain>
            <Grip />
            <span>首层</span>
          </ToolGroup>
          <OutlineTab>构件列表</OutlineTab>
          <Tool $ml={6}><Icon name="pick" /><span>拾取构件</span></Tool>
          <ToolGroup $ml={5} $gap={7}>
            <Grip />
            <Tool $ml={-1} $gap={2}><Icon name="twoPt" /><span>两点</span></Tool>
            <Tool $gap={2}><Icon name="parallel" /><span>平行</span></Tool>
            <Tool $gap={2} $ml={3}><Icon name="angle" /><span>点角</span></Tool>
            <Caret $ml={2} $mr={-2} />
            <Tool><Icon name="arc" /><span>三点辅轴</span></Tool>
            <Caret $ml={2} $mr={-2} />
            <Tool $gap={0} $ml={4}><Icon name="brush" size={14} /><span>删除辅轴</span></Tool>
            <Tool><Icon name="size" /><span>尺寸标注</span></Tool>
            <Caret />
          </ToolGroup>
        </ToolRow>
        <ToolRow $h={30}>
          <ToolGroup $plain $gap={5}>
            <Grip />
            <Icon name="cursor" />
            <span>选</span>
          </ToolGroup>
        </ToolRow>
        <Canvas><CadCanvas /></Canvas>
      </Workspace>
    </Body>

    <EditorWin $x={270} $y={65} $w={420} $h={638}>
      <EditorHead>
        <span>属性编辑器</span>
        <GhostClose>×</GhostClose>
      </EditorHead>
      <TableWrap>
        <PropGrid $cols="22px 121px 225px 30px 20px">
          <CornerCell />
          <HeadCell>属性名称</HeadCell>
          <ValueHead>属性值</ValueHead>
          <TailHead>附加</TailHead>
          <TailHead />
          {propRows.map((row, i) => (
            <React.Fragment key={i}>
              <NumCell $on={i === 0}>{i + 1}</NumCell>
              <NameCell $pad={20} $on={i === 0} $tone={row.tone}>{row.name}</NameCell>
              <ValueCell $on={i === 0} $tone={row.valueTone}>{row.value}</ValueCell>
              <CheckCell>{!row.noCheck && <CheckBox />}</CheckCell>
              <CheckCell />
            </React.Fragment>
          ))}
        </PropGrid>
      </TableWrap>
      <DrawingPane><SectionDrawing /></DrawingPane>
    </EditorWin>

    <DialogWin $x={668} $y={101} $w={745} $h={583}>
      <DialogHead>
        <span>选择参数化图形</span>
        <Icon name="cross" size={13} />
      </DialogHead>
      <DialogBody>
        <DialogLeft>
          <TypeRow>
            <span>参数化截面类型:</span>
            <FakeSelect>
              <span>一字形</span>
              <Icon name="chevron" size={9} />
            </FakeSelect>
          </TypeRow>
          <GroupBox $w={481} $h={457} $mt={18} $pad="10px 0 0 4px">
            <GroupLegend $x={6}>图形</GroupLegend>
            <ThumbRow>
              <ThumbFrame><Teal $w={140} $h={139}><ThumbPlain /></Teal></ThumbFrame>
              <ThumbFrame $on><Teal $w={140} $h={139}><ThumbActive /></Teal></ThumbFrame>
            </ThumbRow>
          </GroupBox>
        </DialogLeft>
        <DialogRight>
          <ParamBox>
            <PropGrid $cols="21px 91px 99px">
              <CornerCell />
              <HeadCell>属性名称</HeadCell>
              <ValueHead>属性值</ValueHead>
              {paramRows.map(([name, value], i) => (
                <React.Fragment key={name}>
                  <NumCell $on={i === 0}>{i + 1}</NumCell>
                  <NameCell $pad={2} $on={i === 0}><Latin>{name}</Latin></NameCell>
                  <ValueCell $on={i === 0}><Latin>{value}</Latin></ValueCell>
                </React.Fragment>
              ))}
            </PropGrid>
          </ParamBox>
          <GroupBox $w={237} $h={225} $mt={11} $pad="11px 0 0 7px">
            <GroupLegend $x={7}>大图预览</GroupLegend>
            <Teal $w={210} $h={210}><PreviewDrawing /></Teal>
          </GroupBox>
        </DialogRight>
      </DialogBody>
      <DialogFoot>
        <PushButton>确定</PushButton>
        <PushButton>取消</PushButton>
      </DialogFoot>
    </DialogWin>

    <Annotation viewBox="0 0 1449 853">
      <path d="M908 262L1005 320L1004 322Z" fill="#a52a2a" />
      <path d="M1000 318L1241 460L1240 463L999 321Z" fill="#f04040" />
      <path d="M1263 473L1236 467L1246 451Z" fill="#f04040" />
    </Annotation>
  </Page>
);

export default App;
